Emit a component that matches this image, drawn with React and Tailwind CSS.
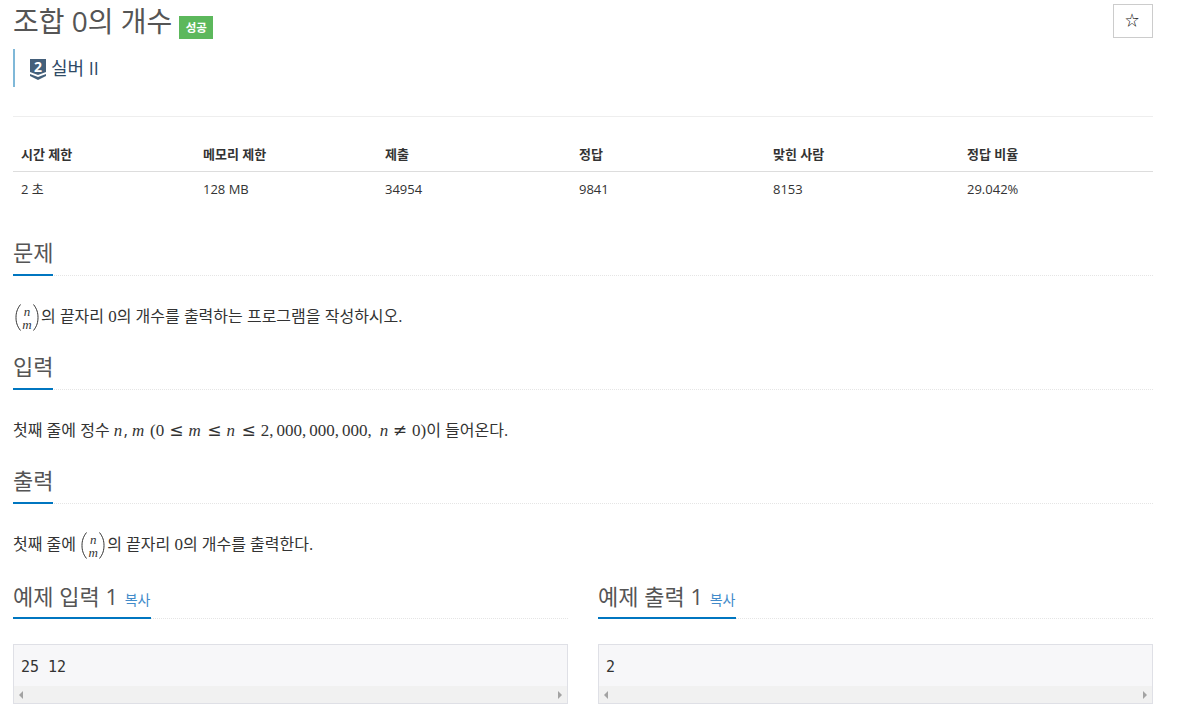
const sans = 'font-["Open_Sans","Noto_Sans_CJK_KR",sans-serif]'

function TierIcon() {
  return (
    <svg width="16" height="21" viewBox="0 0 16 21" className="shrink-0 overflow-visible">
      <path d="M0 0H16V13L8 16L0 13Z" fill="#435f7a" />
      <path d="M0 15L8 18L16 15V17L8 21L0 17Z" fill="#435f7a" />
      <text x="8" y="13" textAnchor="middle" fontSize="14" fontWeight="700" fill="#fff" fontFamily="Open Sans, sans-serif">2</text>
    </svg>
  )
}

function Section({ title, children }) {
  return (
    <section>
      <div className="border-b border-dotted border-[#e5e5e5]">
        <h2 className="-mb-px inline-block h-[38px] border-b-2 border-[#0076c0] text-[22px] leading-[28px] text-[#555]">{title}</h2>
      </div>
      <div className="mt-[26px] h-[28px] whitespace-nowrap text-[16px] leading-[28px] text-[#333]">{children}</div>
    </section>
  )
}

function M({ children }) {
  return <span className='font-["Liberation_Serif",serif] text-[17px]'>{children}</span>
}

function V({ children }) {
  return <i className='font-["Liberation_Serif",serif] text-[17px] tracking-[1.5px]'>{children}</i>
}

function Rel({ children, className = 'mx-[5px]' }) {
  return <span className={`font-["DejaVu_Sans",sans-serif] text-[17px] ${className}`}>{children}</span>
}

function C() {
  return <span className="mr-[3px]">,</span>
}

function Paren({ flip }) {
  return (
    <svg width="6" height="27" viewBox="0 0 6 27" className={flip ? 'shrink-0 -scale-x-100' : 'shrink-0'}>
      <path d="M5.5 0.5C2 5 1 9 1 13.5C1 18 2 22 5.5 26.5" fill="none" stroke="#333" strokeWidth="1" />
    </svg>
  )
}

function Binom({ className = '' }) {
  return (
    <span className={`inline-flex h-[27px] w-[24px] items-center justify-between align-middle font-["Liberation_Serif",serif] text-[#333] ${className}`}>
      <Paren />
      <span className="flex flex-col items-center text-[13px] italic leading-[13px]">
        <span>n</span>
        <span>m</span>
      </span>
      <Paren flip />
    </span>
  )
}

function Sample({ title, value }) {
  return (
    <div className="w-[555px]">
      <div className="border-b border-dotted border-[#e5e5e5]">
        <h2 className="-mb-px inline-block h-[37px] border-b-2 border-[#0076c0] text-[22px] leading-[28px] text-[#555]">
          {title} <a className="ml-[1px] mr-[1px] text-[14px] text-[#428bca]">복사</a>
        </h2>
      </div>
      <div className="mt-[25px] h-[60px] border border-[#dfe0e6] bg-[#f7f7f9]">
        <pre className='h-[41px] pl-[7px] pt-[12px] font-["DejaVu_Sans_Mono",monospace] text-[15px] leading-[20px] text-[#333]'>{value}</pre>
        <div className="flex h-[17px] items-center justify-between bg-[#f1f1f1] px-[5px]">
          <span className="h-0 w-0 border-y-[4px] border-r-[4px] border-y-transparent border-r-[#a3a3a3]" />
          <span className="h-0 w-0 border-y-[4px] border-l-[4px] border-y-transparent border-l-[#a3a3a3]" />
        </div>
      </div>
    </div>
  )
}

const columns = [
  ['시간 제한', '2 초', 'w-[182px]'],
  ['메모리 제한', '128 MB', 'w-[182px]'],
  ['제출', '34954', 'w-[194px]'],
  ['정답', '9841', 'w-[194px]'],
  ['맞힌 사람', '8153', 'w-[194px]'],
  ['정답 비율', '29.042%', 'w-[186px]'],
]

export default function App() {
  return (
    <div className={`h-[720px] w-[1187px] overflow-hidden bg-white pl-[13px] pr-[34px] ${sans}`}>
      <div className="flex items-start justify-between">
        <h1 className="flex h-[49px] items-start pt-[2px] text-[28px] leading-[38px] text-[#555]">
          조합 0의 개수
          <span className="ml-[7px] mt-[14px] flex h-[23px] w-[34px] items-center justify-center bg-[#5cb85c] text-[11.5px] font-bold text-white">성공</span>
        </h1>
        <button className="mt-[4px] flex h-[34px] w-[40px] items-center justify-center border border-[#ccc] bg-white pb-[4px] pr-[2px] text-[14px] text-[#111]">☆</button>
      </div>

      <div className="flex h-[38px] items-start gap-[5px] border-l-2 border-[#7fb8d8] pl-[15px] pt-[10px]">
        <TierIcon />
        <span className="-mt-[3px] text-[18px] leading-[24px] text-[#2f4a66]">실버 II</span>
      </div>

      <div className="mt-[29px] border-t border-[#eee]" />

      <div className="mt-[24px] flex border-b border-[#ddd] pb-[4px] text-[13px] font-bold leading-[26px] text-[#333]">
        {columns.map(([head, , width]) => (
          <div key={head} className={`${width} pl-[8px]`}>{head}</div>
        ))}
      </div>
      <div className="flex pt-[4px] text-[13px] leading-[26px] text-[#333]">
        {columns.map(([head, value, width]) => (
          <div key={head} className={`${width} pl-[8px]`}>{value}</div>
        ))}
      </div>

      <div className="mt-[36px] flex flex-col gap-[22px]">
        <Section title="문제">
          <Binom className="mx-[2px]" />의 끝자리 <M>0</M>의 개수를 출력하는 프로그램을 작성하시오.
        </Section>
        <Section title="입력">
          첫째 줄에 정수 <V>n</V>, <V>m</V> <M>(0</M><Rel>≤</Rel><V>m</V><Rel>≤</Rel><V>n</V><Rel>≤</Rel><M>2<C />000<C />000<C />000<C /></M><span className="ml-[5px]"><V>n</V></span><Rel className="mx-[3px]">≠</Rel><span className="ml-[2px]"><M>0)</M></span>이 들어온다.
        </Section>
        <Section title="출력">
          첫째 줄에 <Binom className="ml-[1px] mr-[2px]" />의 끝자리 <M>0</M>의 개수를 출력한다.
        </Section>
      </div>

      <div className="mt-[24px] flex justify-between">
        <Sample title="예제 입력 1" value="25 12" />
        <Sample title="예제 출력 1" value="2" />
      </div>
    </div>
  )
}
